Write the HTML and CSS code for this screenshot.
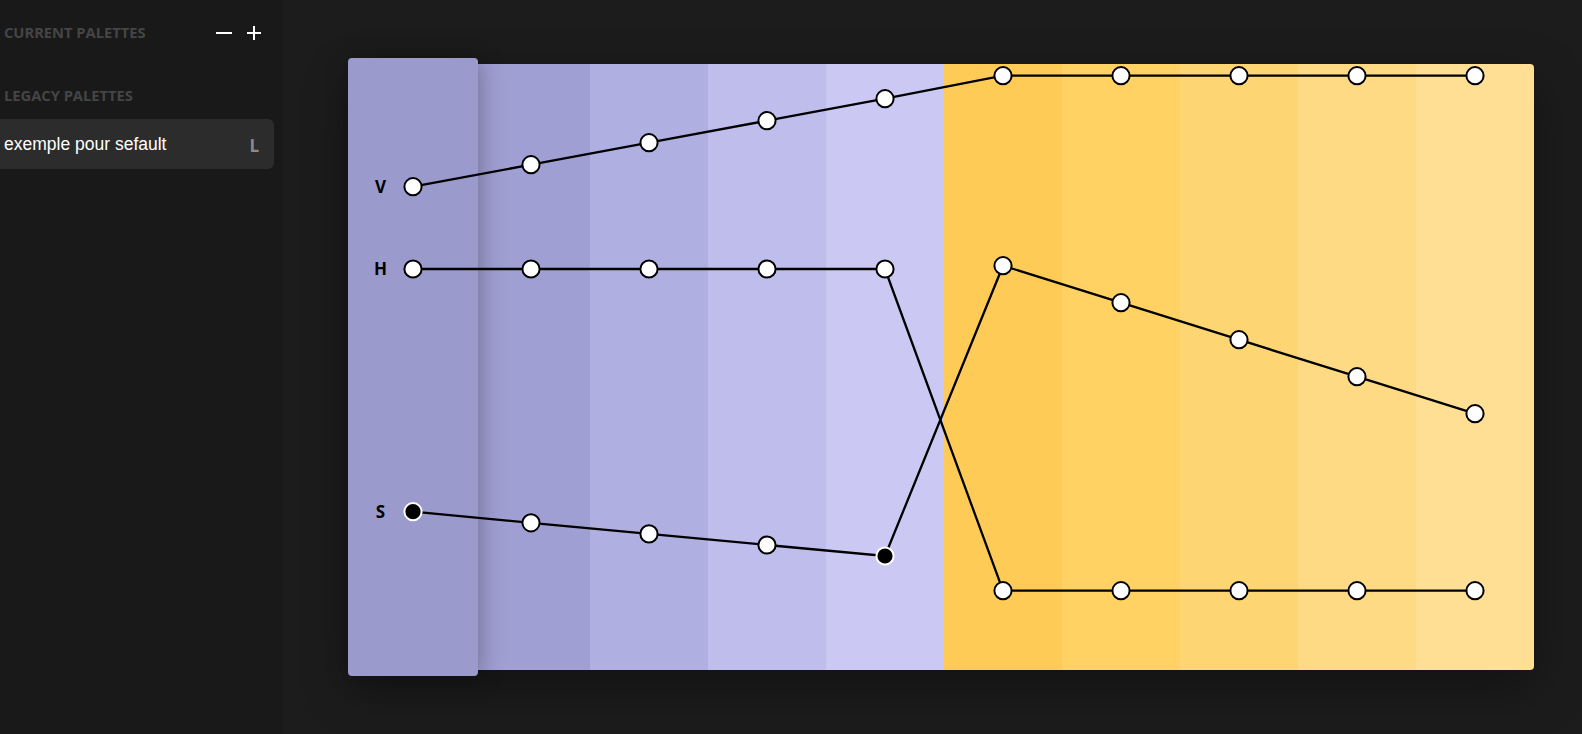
FILE: index.html
```html
<!DOCTYPE html>
<html>
<head>
<meta charset="utf-8">
<link rel="stylesheet" href="styles.css">
</head>
<body>
<aside class="sidebar">
  <div class="section-head">
    <span class="section-title">CURRENT PALETTES</span>
    <div class="head-actions">
      <svg class="icon" width="16" height="16" viewBox="0 0 16 16"><path d="M0 8H16" stroke="#fff" stroke-width="2"/></svg>
      <svg class="icon" width="16" height="16" viewBox="0 0 16 16"><path d="M1 8H15M8 1V15" stroke="#fff" stroke-width="2"/></svg>
    </div>
  </div>
  <div class="section-head legacy">
    <span class="section-title">LEGACY PALETTES</span>
  </div>
  <div class="palette-item">
    <span class="palette-name">exemple pour sefault</span>
    <span class="palette-tag">L</span>
  </div>
</aside>
<main class="main">
  <div class="strip">
    <div class="swatch selected" style="background:#9b9acd"></div>
    <div class="swatch shaded" style="background:#a09fd3"></div>
    <div class="swatch" style="background:#b0afe1"></div>
    <div class="swatch" style="background:#bebdeb"></div>
    <div class="swatch" style="background:#cbc9f3"></div>
    <div class="swatch" style="background:#fecc56"></div>
    <div class="swatch" style="background:#ffd263"></div>
    <div class="swatch" style="background:#fdd673"></div>
    <div class="swatch" style="background:#feda84"></div>
    <div class="swatch last" style="background:#fedf94"></div>
    <svg class="chart" width="1180" height="606" viewBox="0 0 1180 606">
      <g class="lines" fill="none" stroke="#000" stroke-width="2.3">
        <polyline points="59,122.7 177,100.7 295,78.7 413,56.7 531,34.7 649,11.7 767,11.7 885,11.7 1003,11.7 1121,11.7"/>
        <polyline points="59,205 177,205 295,205 413,205 531,205 649,526.7 767,526.7 885,526.7 1003,526.7 1121,526.7"/>
        <polyline points="59,447.7 177,458.8 295,469.9 413,481 531,492 649,201.7 767,238.7 885,275.7 1003,312.7 1121,349.7"/>
      </g>
      <g class="dots" fill="#fff" stroke="#000" stroke-width="2">
        <circle cx="59" cy="122.7" r="8.6"/><circle cx="177" cy="100.7" r="8.6"/><circle cx="295" cy="78.7" r="8.6"/><circle cx="413" cy="56.7" r="8.6"/><circle cx="531" cy="34.7" r="8.6"/>
        <circle cx="649" cy="11.7" r="8.6"/><circle cx="767" cy="11.7" r="8.6"/><circle cx="885" cy="11.7" r="8.6"/><circle cx="1003" cy="11.7" r="8.6"/><circle cx="1121" cy="11.7" r="8.6"/>
        <circle cx="59" cy="205" r="8.6"/><circle cx="177" cy="205" r="8.6"/><circle cx="295" cy="205" r="8.6"/><circle cx="413" cy="205" r="8.6"/><circle cx="531" cy="205" r="8.6"/>
        <circle cx="649" cy="526.7" r="8.6"/><circle cx="767" cy="526.7" r="8.6"/><circle cx="885" cy="526.7" r="8.6"/><circle cx="1003" cy="526.7" r="8.6"/><circle cx="1121" cy="526.7" r="8.6"/>
        <circle cx="177" cy="458.8" r="8.6"/><circle cx="295" cy="469.9" r="8.6"/><circle cx="413" cy="481" r="8.6"/>
        <circle cx="649" cy="201.7" r="8.6"/><circle cx="767" cy="238.7" r="8.6"/><circle cx="885" cy="275.7" r="8.6"/><circle cx="1003" cy="312.7" r="8.6"/><circle cx="1121" cy="349.7" r="8.6"/>
      </g>
      <g class="dots-active" fill="#000" stroke="#fff" stroke-width="2">
        <circle cx="59" cy="447.7" r="8.6"/><circle cx="531" cy="492" r="8.6"/>
      </g>
      <g class="labels">
        <text x="26.5" y="128.8">V</text>
        <text x="26.5" y="211">H</text>
        <text x="26.5" y="453.8">S</text>
      </g>
    </svg>
  </div>
</main>
</body>
</html>
```
FILE: styles.css
```css
html, body {
  margin: 0;
  padding: 0;
}
body {
  width: 1582px;
  height: 734px;
  overflow: hidden;
  display: flex;
  background: #1c1c1c;
  font-family: "Open Sans", "Liberation Sans", sans-serif;
}
.sidebar {
  width: 283px;
  flex: none;
  background: #191919;
  padding-top: 18px;
  box-sizing: border-box;
}
.section-head {
  display: flex;
  align-items: center;
  justify-content: space-between;
  height: 28px;
  padding: 0 21px 0 4px;
}
.section-head.legacy {
  margin-top: 35px;
}
.section-title {
  font-size: 14.7px;
  font-weight: 700;
  color: #454545;
  line-height: 28px;
}
.head-actions {
  display: flex;
  gap: 14px;
  align-items: center;
  padding-top: 2px;
}
.icon {
  display: block;
}
.palette-item {
  margin-top: 10px;
  width: 274px;
  height: 50px;
  box-sizing: border-box;
  background: #2c2c2c;
  border-radius: 0 6px 6px 0;
  display: flex;
  align-items: center;
  justify-content: space-between;
  padding: 0 15px 0 4px;
}
.palette-name {
  font-family: "Liberation Sans", Arial, sans-serif;
  font-size: 17.5px;
  color: #fff;
}
.palette-tag {
  font-family: "Open Sans", sans-serif;
  font-weight: 700;
  font-size: 17px;
  color: #8a8a8a;
  padding-top: 2px;
}
.main {
  flex: 1;
  padding: 64px 0 0 71px;
}
.strip {
  position: relative;
  width: 1180px;
  height: 606px;
  display: flex;
  border-radius: 4px;
  box-shadow: 0 18px 50px rgba(0, 0, 0, 0.35);
}
.swatch {
  flex: 1;
  height: 100%;
}
.swatch.last {
  border-radius: 0 4px 4px 0;
}
.swatch.selected {
  position: relative;
  z-index: 1;
}
.swatch.selected::before {
  content: "";
  position: absolute;
  inset: -6px;
  background: inherit;
  border-radius: 4px;
  box-shadow: 2px 2px 24px rgba(0, 0, 0, 0.3);
}
.chart {
  position: absolute;
  left: 0;
  top: 0;
  z-index: 2;
}
.labels text {
  font-family: "Open Sans", sans-serif;
  font-weight: 700;
  font-size: 17px;
  fill: #000;
  text-anchor: middle;
}
```
